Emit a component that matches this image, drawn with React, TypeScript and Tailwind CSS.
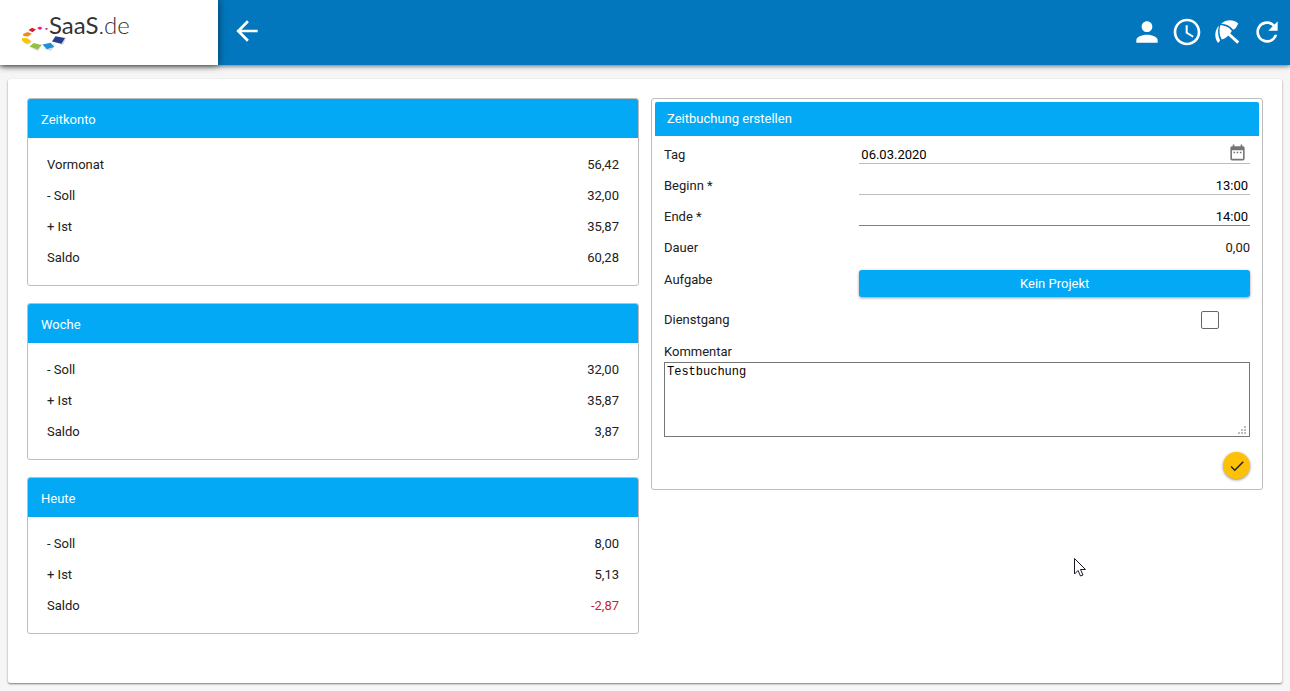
import { useState } from 'react';
import type { ReactNode } from 'react';
import {
  MdAccessTime,
  MdArrowBack,
  MdCheck,
  MdDateRange,
  MdPerson,
  MdRefresh,
} from 'react-icons/md';

// ── Icons ──────────────────────────────────────────────────────────────────────
function Umbrella({ size }: { size: number }) {
  return (
    <svg width={size} height={size} viewBox="0 0 32 32" fill="currentColor">
      {/* canopy, three panels */}
      <path d="M8 9.500C3.500 14.500 3 21.500 7 27l2.200-2.600C6.600 19.500 6.600 14.500 8 9.500z" />
      <path d="M9.300 9.300C7.800 14.500 8.300 19.300 10.800 23.600 14.500 22.600 18.500 19 20.800 15 18.300 11.500 14 9.300 9.300 9.300z" />
      <path d="M10.200 7.800C15.500 3.200 22.300 3.300 27.300 7.500l-2.600 4.700-2.500 1.600C19.300 9.900 15 7.800 10.200 7.800z" />
      <path d="M17.200 17.500L27.200 26.700" stroke="currentColor" strokeWidth="3" />
    </svg>
  );
}

// ── Data ───────────────────────────────────────────────────────────────────────
type Entry = { label: string; value: string; negative?: boolean };

const ACCOUNTS: { title: string; rows: Entry[] }[] = [
  {
    title: 'Zeitkonto',
    rows: [
      { label: 'Vormonat', value: '56,42' },
      { label: '- Soll', value: '32,00' },
      { label: '+ Ist', value: '35,87' },
      { label: 'Saldo', value: '60,28' },
    ],
  },
  {
    title: 'Woche',
    rows: [
      { label: '- Soll', value: '32,00' },
      { label: '+ Ist', value: '35,87' },
      { label: 'Saldo', value: '3,87' },
    ],
  },
  {
    title: 'Heute',
    rows: [
      { label: '- Soll', value: '8,00' },
      { label: '+ Ist', value: '5,13' },
      { label: 'Saldo', value: '-2,87', negative: true },
    ],
  },
];

const ACTIONS = [
  { label: 'Profil', icon: MdPerson },
  { label: 'Zeiterfassung', icon: MdAccessTime },
  { label: 'Urlaub', icon: Umbrella },
  { label: 'Aktualisieren', icon: MdRefresh },
];

// ── Header ─────────────────────────────────────────────────────────────────────
function Logo() {
  return (
    <svg width="112" height="44" viewBox="0 0 112 44" role="img" aria-label="SaaS.de">
      {/* soft shadow under the tiles */}
      <g opacity="0.2" fill="#444444">
        <path d="M32 31l9 3 3-7-1-1-4 6z" />
        <path d="M21 37l8 3 4-6-1-1-4 5z" />
        <path d="M8 36l8 4 4-6-1-1-4 5z" />
        <path d="M1 31l5 3 4-3z" />
      </g>
      <path d="M23 17.500l2-.5 1 1-2 1z" fill="#a3238e" />
      <path d="M15 17l3-1.500 2.500 1.500-2.500 2z" fill="#ec1c8e" />
      <path d="M6.500 19l3.500-2.200 4 1.700-3.500 2.700z" fill="#d2232a" />
      <path d="M1 23l4.500-2 4.500 1.800-4 2.700-4.500-.5z" fill="#f0862a" />
      <path d="M0 27l5.500.2 4 3.300-5 2.200-4.300-2.700z" fill="#fdc400" />
      <path d="M7.500 35.500l4.200-3.500 7.800 2-4 4.500z" fill="#92c13e" />
      <path d="M20.500 33.500l8.200-1.700 3.600 4.200-7.500 2.200z" fill="#1d93d6" />
      <path d="M30 30.500l3.500-5.300 9.500 1.800-3.500 5.700z" fill="#24408f" />
      <text x="27" y="23" fill="#333333" fontFamily="Lato, 'Open Sans', sans-serif" fontSize="24">
        SaaS
        <tspan fontWeight="300">.de</tspan>
      </text>
    </svg>
  );
}

function Header() {
  return (
    <header className="relative z-10 flex h-[65px] bg-[#0277bd] text-white shadow-[0_1px_5px_rgba(0,0,0,0.6)]">
      <a href="#" className="flex w-[218px] shrink-0 bg-white pt-[11px] pl-[22px] shadow-[0_0_8px_rgba(0,0,0,0.6)]">
        <Logo />
      </a>
      <button type="button" aria-label="Zurück" className="ml-[13px] pb-1">
        <MdArrowBack size={32} />
      </button>
      <nav className="ml-auto flex items-center gap-2 pr-[7px] pb-0.5">
        {ACTIONS.map(({ label, icon: ActionIcon }) => (
          <button key={label} type="button" aria-label={label}>
            <ActionIcon size={32} />
          </button>
        ))}
      </nav>
    </header>
  );
}

// ── Account cards ──────────────────────────────────────────────────────────────
function AccountCard({ title, rows }: { title: string; rows: Entry[] }) {
  return (
    <section className="overflow-hidden rounded-[3px] border border-[#bdbdbd]">
      <h2 className="flex h-[39px] items-center bg-[#03a9f4] px-[13px] pt-[3px] text-white">{title}</h2>
      <dl className="px-[19px] pt-[11px] pb-3">
        {rows.map(({ label, value, negative }) => (
          <div key={label} className="flex justify-between leading-[31px]">
            <dt>{label}</dt>
            <dd className={negative ? 'text-[#c62828]' : ''}>{value}</dd>
          </div>
        ))}
      </dl>
    </section>
  );
}

// ── Booking form ───────────────────────────────────────────────────────────────
function Field({ id, label, children }: { id: string; label: string; children: ReactNode }) {
  return (
    <div className="grid h-[31px] grid-cols-3 items-center">
      <label htmlFor={id}>{label}</label>
      <div className="col-span-2 flex">{children}</div>
    </div>
  );
}

function BookingForm() {
  const [day, setDay] = useState('06.03.2020');
  const [begin, setBegin] = useState('13:00');
  const [end, setEnd] = useState('14:00');
  const [trip, setTrip] = useState(false);
  const [comment, setComment] = useState('Testbuchung');

  return (
    <form
      className="rounded-[3px] border border-[#bdbdbd] p-[3px]"
      onSubmit={e => e.preventDefault()}
    >
      <h2 className="flex h-[34px] items-center rounded-t-[2px] bg-[#03a9f4] px-3 text-white">
        Zeitbuchung erstellen
      </h2>
      <div className="px-[9px] pt-[3px] pb-[7px]">
        <Field id="day" label="Tag">
          <div className="flex h-[19px] w-full items-center border-b border-[#bdbdbd]">
            <input
              id="day"
              value={day}
              onChange={e => setDay(e.target.value)}
              className="min-w-0 flex-1 px-0.5 pt-0.5 text-black outline-none"
            />
            <button type="button" aria-label="Kalender öffnen" className="mr-[3px] pb-1 text-[#757575]">
              <MdDateRange size={19} />
            </button>
          </div>
        </Field>
        <Field id="begin" label="Beginn *">
          <input
            id="begin"
            value={begin}
            onChange={e => setBegin(e.target.value)}
            className="h-[19px] w-full border-b border-[#bdbdbd] px-0.5 text-right text-black outline-none"
          />
        </Field>
        <Field id="end" label="Ende *">
          <input
            id="end"
            value={end}
            onChange={e => setEnd(e.target.value)}
            className="h-[19px] w-full border-b border-[#03a9f4] px-0.5 text-right text-black outline-none"
          />
        </Field>
        <Field id="duration" label="Dauer">
          <output id="duration" className="ml-auto">0,00</output>
        </Field>
        <div className="mt-px grid h-10 grid-cols-3 items-start">
          <label htmlFor="project" className="leading-[31px]">Aufgabe</label>
          <button
            id="project"
            type="button"
            className="col-span-2 mt-[6px] h-[27px] rounded-[3px] bg-[#03a9f4] text-white shadow-[0_1px_3px_rgba(0,0,0,0.4)]"
          >
            Kein Projekt
          </button>
        </div>
        <div className="flex h-8 items-center justify-between">
          <label htmlFor="trip">Dienstgang</label>
          <input
            id="trip"
            type="checkbox"
            checked={trip}
            onChange={e => setTrip(e.target.checked)}
            className="mr-[31px] size-[18px] appearance-none rounded-[2px] border border-[#666666] checked:bg-[#03a9f4]"
          />
        </div>
        <label htmlFor="comment" className="block pt-[5px] leading-[21px]">Kommentar</label>
        <div className="relative">
          <textarea
            id="comment"
            value={comment}
            onChange={e => setComment(e.target.value)}
            className="block h-[75px] w-full resize-none border border-[#767676] p-0.5 font-['Liberation_Mono',monospace] text-[12px] leading-[14px] text-black outline-none"
          />
          <svg className="pointer-events-none absolute right-1 bottom-[3px]" width="8" height="8" fill="#bdbdbd">
            <path d="M6 0h2v2h-2zM3 3h2v2h-2zM6 3h2v2h-2zM0 6h2v2h-2zM3 6h2v2h-2zM6 6h2v2h-2z" />
          </svg>
        </div>
        <button
          type="submit"
          aria-label="Speichern"
          className="mt-[15px] ml-auto flex size-[27px] items-center justify-center rounded-full bg-[#ffc107] text-[#212121] shadow-[0_1px_3px_rgba(0,0,0,0.45)]"
        >
          <MdCheck size={18} />
        </button>
      </div>
    </form>
  );
}

// ── Page ───────────────────────────────────────────────────────────────────────
export default function App() {
  return (
    <div className="flex min-h-screen flex-col bg-[#f6f6f6] font-[Roboto,sans-serif] text-[13px] leading-4 text-[#212121]">
      <Header />
      <main className="relative mx-2 mt-[14px] mb-2 grid flex-1 grid-cols-2 items-start gap-3 rounded-[2px] bg-white p-[19px] shadow-[0_1px_2px_rgba(0,0,0,0.5)]">
        <div className="flex flex-col gap-[17px]">
          {ACCOUNTS.map(account => (
            <AccountCard key={account.title} {...account} />
          ))}
        </div>
        <BookingForm />
        {/* mouse pointer */}
        <svg
          className="pointer-events-none absolute top-[479px] left-[1066px]"
          width="13"
          height="20"
          viewBox="0 0 13 20"
          fill="#ffffff"
          stroke="#1a1a2e"
        >
          <path d="M.5 .5v15.500l3.500-3.500 2.500 5.500 2.500-1-2.500-5.500h5z" />
        </svg>
      </main>
    </div>
  );
}
